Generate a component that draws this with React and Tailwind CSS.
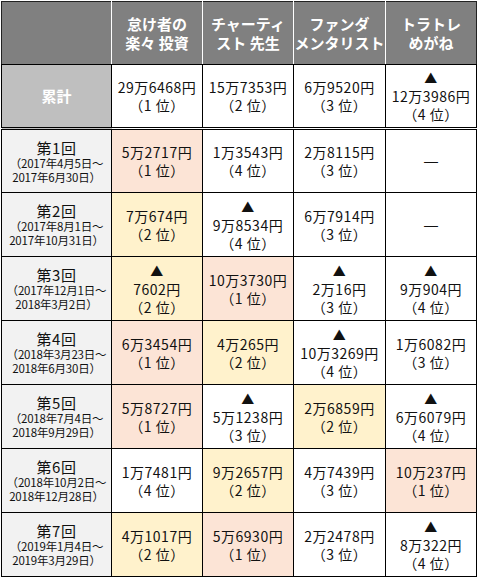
import React from "react";

const FONT = { fontFamily: '"Noto Sans CJK JP", "Noto Sans", sans-serif' };

const headers = [
  ["怠け者の", "楽々 投資"],
  ["チャーティ", "スト 先生"],
  ["ファンダ", "メンタリスト"],
  ["トラトレ", "めがね"],
];

const total = [
  { v: "29万6468円", r: 1 },
  { v: "15万7353円", r: 2 },
  { v: "6万9520円", r: 3 },
  { v: "12万3986円", r: 4, neg: true },
];

const rounds = [
  {
    t: "第1回",
    d: ["（2017年4月5日～", "2017年6月30日）"],
    c: [
      { v: "5万2717円", r: 1, bg: "p" },
      { v: "1万3543円", r: 4 },
      { v: "2万8115円", r: 3 },
      null,
    ],
  },
  {
    t: "第2回",
    d: ["（2017年8月1日～", "2017年10月31日）"],
    c: [
      { v: "7万674円", r: 2, bg: "y" },
      { v: "9万8534円", r: 4, neg: true },
      { v: "6万7914円", r: 3 },
      null,
    ],
  },
  {
    t: "第3回",
    d: ["（2017年12月1日～", "2018年3月2日）"],
    c: [
      { v: "7602円", r: 2, neg: true, bg: "y" },
      { v: "10万3730円", r: 1, bg: "p" },
      { v: "2万16円", r: 3, neg: true },
      { v: "9万904円", r: 4, neg: true },
    ],
  },
  {
    t: "第4回",
    d: ["（2018年3月23日～", "2018年6月30日）"],
    c: [
      { v: "6万3454円", r: 1, bg: "p" },
      { v: "4万265円", r: 2, bg: "y" },
      { v: "10万3269円", r: 4, neg: true },
      { v: "1万6082円", r: 3 },
    ],
  },
  {
    t: "第5回",
    d: ["（2018年7月4日～", "2018年9月29日）"],
    c: [
      { v: "5万8727円", r: 1, bg: "p" },
      { v: "5万1238円", r: 3, neg: true },
      { v: "2万6859円", r: 2, bg: "y" },
      { v: "6万6079円", r: 4, neg: true },
    ],
  },
  {
    t: "第6回",
    d: ["（2018年10月2日～", "2018年12月28日）"],
    c: [
      { v: "1万7481円", r: 4 },
      { v: "9万2657円", r: 2, bg: "y" },
      { v: "4万7439円", r: 3 },
      { v: "10万237円", r: 1, bg: "p" },
    ],
  },
  {
    t: "第7回",
    d: ["（2019年1月4日～", "2019年3月29日）"],
    c: [
      { v: "4万1017円", r: 2, bg: "y" },
      { v: "5万6930円", r: 1, bg: "p" },
      { v: "2万2478円", r: 3 },
      { v: "8万322円", r: 4, neg: true },
    ],
  },
];

function Value({ cell }) {
  if (!cell) {
    return (
      <div
        className="text-[14px] leading-[18px]"
        style={{ fontFamily: '"DejaVu Sans", sans-serif' }}
      >
        ―
      </div>
    );
  }
  return (
    <div className="flex flex-col items-center text-[14px] leading-[18px] tracking-[0.5px]">
      {cell.neg && <div className="text-[13px] leading-[18px]">▲</div>}
      <div>{cell.v}</div>
      <div>（{cell.r} 位）</div>
    </div>
  );
}

function bgClass(bg) {
  if (bg === "p") return "bg-[#fce4d6]";
  if (bg === "y") return "bg-[#fff2cc]";
  return "bg-white";
}

export default function App() {
  return (
    <div className="bg-white w-[477px] h-[579px] pl-[1px] pt-[1px]" style={FONT}>
      <table className="border-collapse table-fixed w-[475px] text-[#111]">
        <colgroup>
          <col className="w-[110px]" />
          <col className="w-[91px]" />
          <col className="w-[91px]" />
          <col className="w-[92px]" />
          <col className="w-[91px]" />
        </colgroup>
        <tbody>
          <tr className="h-[63px]">
            <td className="bg-[#808080] border border-[#222] border-r-white"></td>
            {headers.map((h, i) => (
              <td
                key={i}
                className={
                  "bg-[#808080] border-t border-b border-[#222] text-center align-middle text-white font-bold text-[15px] leading-[19px] " +
                  (i < 3 ? "border-r border-r-white" : "border-r border-r-[#222]")
                }
              >
                <div>{h[0]}</div>
                <div>{h[1]}</div>
              </td>
            ))}
          </tr>
          <tr className="h-[64px]">
            <td className="bg-[#bfbfbf] border border-black border-b-[3px] border-b-black border-double text-center align-middle text-white font-bold text-[15px]">
              累計
            </td>
            {total.map((c, i) => (
              <td
                key={i}
                className="bg-white border border-black border-b-[3px] border-double text-center align-middle"
              >
                <Value cell={c} />
              </td>
            ))}
          </tr>
          {rounds.map((r, ri) => (
            <tr key={ri} className="h-[64px]">
              <td className="bg-[#f2f2f2] border border-black text-center align-middle">
                <div className="text-[15px] leading-[17px] tracking-[0.5px]">{r.t}</div>
                <div className="text-[11.5px] leading-[14px] tracking-[-0.2px]">{r.d[0]}</div>
                <div className="text-[11.5px] leading-[14px] tracking-[-0.2px]">{r.d[1]}</div>
              </td>
              {r.c.map((c, ci) => (
                <td
                  key={ci}
                  className={"border border-black text-center align-middle " + bgClass(c && c.bg)}
                >
                  <Value cell={c} />
                </td>
              ))}
            </tr>
          ))}
        </tbody>
      </table>
    </div>
  );
}
